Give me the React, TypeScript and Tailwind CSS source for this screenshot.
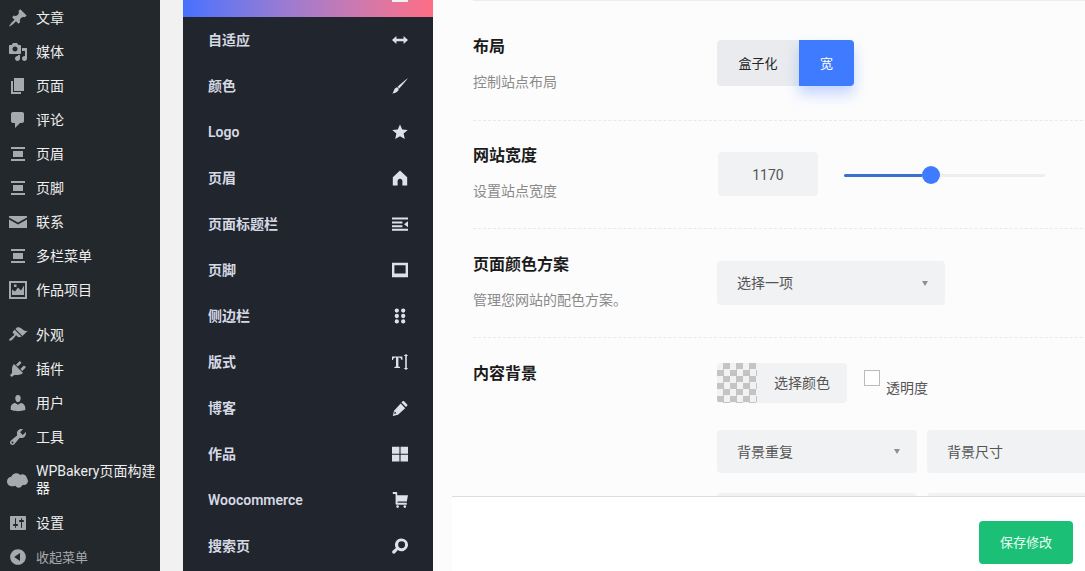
import type { ReactNode } from "react";

const FONT = "font-['Roboto','Noto_Sans_CJK_SC',sans-serif]";

function Icon({ d, className = "" }: { d: string; className?: string }) {
  return (
    <svg viewBox="0 0 20 20" fill="currentColor" fillRule="evenodd" className={className}>
      <path d={d} />
    </svg>
  );
}

// Dashboard menu glyphs
const P = {
  pin: "M10.44 3.02l1.82-1.82 6.36 6.35-1.83 1.82c-1.05-.68-2.48-.57-3.41.36l-.75.75c-.92.93-1.04 2.35-.35 3.41l-1.83 1.82-2.41-2.41-2.8 2.79c-.42.42-3.38 2.71-3.8 2.29s1.86-3.39 2.28-3.81l2.79-2.79L4.1 9.36l1.83-1.82c1.05.69 2.48.57 3.4-.36l.75-.75c.93-.92 1.05-2.35.36-3.41z",
  media: "M13 11V4c0-.55-.45-1-1-1h-1.67L9 1H5L3.67 3H2c-.55 0-1 .45-1 1v7c0 .55.45 1 1 1h10c.55 0 1-.45 1-1zM7 4.5c1.38 0 2.5 1.12 2.5 2.5S8.38 9.5 7 9.5 4.5 8.38 4.5 7 5.62 4.5 7 4.5zM14 6h5v10.5c0 1.38-1.12 2.5-2.5 2.5S14 17.88 14 16.5s1.12-2.5 2.5-2.5c.17 0 .34.02.5.05V9h-3V6zm-4 8.05V13h2v3.5c0 1.38-1.12 2.5-2.5 2.5S7 17.88 7 16.5 8.12 14 9.5 14c.17 0 .34.02.5.05z",
  page: "M6 15V2h10v13H6zm-1 1h8v2H3V5h2v11z",
  comment: "M5 2h9c1.1 0 2 .9 2 2v7c0 1.1-.9 2-2 2h-2l-5 5v-5H5c-1.1 0-2-.9-2-2V4c0-1.1.9-2 2-2z",
  layout: "M3 3h14v2H3zM5 7h10v6H5zM3 15h14v2H3z",
  mail: "M1 4h18v1.500L10 10.500 1 5.500zM1 7.500l9 5 9-5V16H1z",
  portfolio: "M1 1h18v18H1zM3 3v14h14V3zM4 15V9.500l3 2 3-4 3 3 3-5V15zM6 4.500h2.500V7H6z",
  brush: "M14.480 11.060L7.410 3.990l1.500-1.500c.5-.56 2.300-.47 3.510.32 1.210.8 1.430 1.280 2.910 2.100 1.180.64 2.450 1.260 4.450.85zm-.71.71L6.700 4.700 4.930 6.470c-.39.39-.39 1.020 0 1.410l1.060 1.060c.39.39.39 1.030 0 1.420-.6.6-1.430 1.110-2.210 1.690-.35.26-.7.53-1.010.84C1.430 13.230.76 14.770 1.440 15.450c.68.68 2.220.01 3.560-1.330.31-.31.58-.66.84-1.010.58-.78 1.090-1.610 1.690-2.210.39-.39 1.030-.39 1.420 0l1.060 1.060c.39.39 1.020.39 1.410 0z",
  plug: "M13.110 4.360L9.870 7.600 8 5.730l3.240-3.240c.35-.34 1.050-.2 1.560.32.52.51.66 1.210.31 1.550zm-8 1.770l.91-1.120 9.010 9.010-1.190.84c-.71.71-2.630 1.160-3.820 1.160H6.140L4.900 17.260c-.59.59-1.540.59-2.120 0-.59-.58-.59-1.530 0-2.120l1.240-1.240v-3.880c0-1.130.4-3.190 1.090-3.890zm7.260 3.970l3.240-3.240c.34-.35 1.040-.21 1.550.31.52.51.66 1.210.31 1.550l-3.240 3.250z",
  user: "M10 9.250c-2.270 0-2.730-3.440-2.730-3.440C7 4.020 7.820 2 9.970 2c2.160 0 2.980 2.020 2.710 3.810 0 0-.41 3.440-2.680 3.440zm0 2.570L12.720 10c2.390 0 4.520 2.330 4.520 4.530v2.490s-3.650 1.130-7.240 1.130c-3.650 0-7.240-1.130-7.240-1.130v-2.490c0-2.250 1.940-4.480 4.470-4.480z",
  wrench: "M16.680 9.770c-1.340 1.340-3.300 1.670-4.950.99l-5.410 6.520c-.99.99-2.590.99-3.580 0s-.99-2.590 0-3.570l6.520-5.420c-.68-1.650-.35-3.610.99-4.950 1.280-1.280 3.120-1.620 4.720-1.060l-2.890 2.890 2.820 2.820 2.860-2.870c.53 1.580.18 3.390-1.080 4.650zM3.810 16.210c.4.39 1.040.39 1.430 0 .4-.4.4-1.040 0-1.430-.39-.4-1.030-.4-1.430 0-.39.39-.39 1.030 0 1.430z",
  cloud: "M4.500 15.500C2 15.500 0 13.500 0 11c0-2.300 1.700-4.200 4-4.500C5 4.400 7 3 9.300 3.200c1.300.1 2.400.7 3.200 1.500 1-.6 2.100-.8 3.200-.5 1.900.5 3.200 2 3.400 3.800.6.700.9 1.600.9 2.500 0 2.200-1.700 3.800-3.700 3.800h-1.500c-.9 1.600-2.300 2.700-4 2.500-1.200-.2-2.200-.9-2.800-1.900-1 .4-2.300.6-3.500.6z",
  sliders: "M18 16V4c0-.55-.45-1-1-1H3c-.55 0-1 .45-1 1v12c0 .55.45 1 1 1h14c.55 0 1-.45 1-1zM8 11h1c.55 0 1 .45 1 1s-.45 1-1 1H8v1.500c0 .28-.22.5-.5.5s-.5-.22-.5-.5V13H6c-.55 0-1-.45-1-1s.45-1 1-1h1V5.500c0-.28.22-.5.5-.5s.5.22.5.5V11zm5-2h-1c-.55 0-1-.45-1-1s.45-1 1-1h1V5.500c0-.28.22-.5.5-.5s.5.22.5.5V7h1c.55 0 1 .45 1 1s-.45 1-1 1h-1v5.500c0 .28-.22.5-.5.5s-.5-.22-.5-.5V9z",
  collapse: "M10 2.160c4.330 0 7.840 3.510 7.840 7.840s-3.510 7.840-7.840 7.840S2.160 14.330 2.160 10 5.710 2.160 10 2.160zm2 11.720V6.120L6.180 9.970z",
};

// Options panel glyphs
const Q = {
  leftright: "M0 10l5.500-5v3.500h9V5l5.500 5-5.500 5v-3.500h-9V15z",
  paint: "M20 0C17 4 12 10 9 13l-2-2C10 8 16 3 20 0zM6.500 11.500l2 2c-.2 2.800-3 5.500-8.500 6 2-1.500 2-3.500 3-5.500.7-1.400 2-2.300 3.500-2.500z",
  star: "M10 .5l2.800 6.300 6.900.7-5.200 4.500 1.500 6.800L10 15.300l-6 3.500 1.500-6.800L.3 7.500l6.900-.7z",
  home: "M10 .5l9 8.500v10.500h-6V14c0-1.800-1.200-3-3-3s-3 1.200-3 3v5.500H1V9z",
  title: "M0 2h20v2.500H0zM0 7h13v2.500H0zM0 11.500h13V14H0zM0 16h20v2.500H0zM20 6.500v7.500l-5-3.700z",
  foot: "M0 1h20v18H0zM3 4v10.500h14V4z",
  dots: "M6 .5a2.700 2.700 0 1 1 0 5.400A2.700 2.700 0 0 1 6 .5zM14 .5a2.700 2.700 0 1 1 0 5.400 2.700 2.700 0 0 1 0-5.400zM6 7.300A2.700 2.700 0 1 1 6 12.700 2.700 2.700 0 0 1 6 7.300zM14 7.300a2.700 2.700 0 1 1 0 5.400 2.700 2.700 0 0 1 0-5.400zM6 14.100a2.700 2.700 0 1 1 0 5.400 2.700 2.700 0 0 1 0-5.400zM14 14.100a2.700 2.700 0 1 1 0 5.400 2.700 2.700 0 0 1 0-5.400z",
  type: "M0 3h13v4.500h-1.200C11.400 5.500 10.500 4.600 8 4.500V15.500l2 .7V17.500H3v-1.300l2-.7V4.500C2.500 4.600 1.600 5.500 1.200 7.500H0zM14.500 2.500L17.500 0l3 2.500h-2V17.500h2l-3 2.500-3-2.500h2V2.500z",
  pen: "M14.500 1l4.500 4.500c.5.500.5 1.200 0 1.700l-1.500 1.500-5.700-5.700 1.500-1.500c.5-.5 1.200-.5 1.700 0zM10.800 4.500l5.700 5.700-9 8.300L1 20l1.500-6.500zM3.500 14.500l-.8 3 3-.8z",
  grid: "M0 1h9.300v8.700H0zM10.700 1H20v8.700h-9.300zM0 10.800h9.300v8.700H0zM10.700 10.800H20v8.700h-9.300z",
  cart: "M1 0h4.500c.6 0 1 .4 1 1v3H20l-1.500 8H7v1.500h11.500V16H5.500c-.6 0-1-.4-1-1V2.500H1zM7 16.500a1.700 1.700 0 1 1 0 3.400 1.700 1.700 0 0 1 0-3.400zM16 16.500a1.700 1.700 0 1 1 0 3.400 1.700 1.700 0 0 1 0-3.400z",
  search: "M12 .5a8 8 0 1 1-4.700 14.500l-3.500 4c-.8.800-2.200.8-3 0s-.8-2.200 0-3l4-3.500A8 8 0 0 1 12 .5zm0 3.700a4.300 4.300 0 1 0 0 8.600 4.300 4.300 0 0 0 0-8.600z",
};

const upper = [
  ["文章", P.pin],
  ["媒体", P.media],
  ["页面", P.page],
  ["评论", P.comment],
  ["页眉", P.layout],
  ["页脚", P.layout],
  ["联系", P.mail],
  ["多栏菜单", P.layout],
  ["作品项目", P.portfolio],
];
const lower = [
  ["外观", P.brush],
  ["插件", P.plug],
  ["用户", P.user],
  ["工具", P.wrench],
];
const panelRows = [
  ["自适应", Q.leftright],
  ["颜色", Q.paint],
  ["Logo", Q.star],
  ["页眉", Q.home],
  ["页面标题栏", Q.title],
  ["页脚", Q.foot],
  ["侧边栏", Q.dots],
  ["版式", Q.type],
  ["博客", Q.pen],
  ["作品", Q.grid],
  ["Woocommerce", Q.cart],
  ["搜索页", Q.search],
];

function MenuItem({ label, d }: { label: string; d: string }) {
  return (
    <div className="flex h-[34px] items-center">
      <div className="flex w-[36px] shrink-0 justify-center pr-[1px]">
        <Icon d={d} className="h-5 w-5 text-[#a7aaad]" />
      </div>
      <span className="text-[14px] leading-[17px] text-[#eeeeee]">{label}</span>
    </div>
  );
}

function Caret() {
  return (
    <svg viewBox="0 0 6 5" className="h-[5px] w-[6px] text-[#8a8f98]" fill="currentColor">
      <path d="M0 0h6L3 5z" />
    </svg>
  );
}

function SelectBox({ label, className, caret = true }: { label: string; className: string; caret?: boolean }) {
  return (
    <div className={`flex shrink-0 items-center justify-between rounded-[4px] bg-[#f1f2f4] pl-5 pr-[17px] text-[14px] text-[#555555] ${className}`}>
      <span className="pt-[1px]">{label}</span>
      {caret && <Caret />}
    </div>
  );
}

function Section({
  title,
  hint,
  height,
  top,
  last = false,
  children,
}: {
  title: string;
  hint?: string;
  height: string;
  top: string;
  last?: boolean;
  children: ReactNode;
}) {
  return (
    <section className={`flex ${height} shrink-0 ${last ? "" : "border-b border-dashed border-[#e9e9ec]"}`}>
      <div className={`w-[244px] shrink-0 ${top}`}>
        <h3 className="text-[16px] font-bold leading-6 text-[#1b1b1b]">{title}</h3>
        {hint && <p className="mt-[13px] text-[14px] leading-[20px] text-[#8a8a8a]">{hint}</p>}
      </div>
      <div className="min-w-0 flex-1">{children}</div>
    </section>
  );
}

export default function App() {
  return (
    <div className={`flex h-screen w-full overflow-hidden bg-[#f1f1f1] ${FONT}`}>
      {/* WordPress admin menu */}
      <aside className="w-[160px] shrink-0 bg-[#23282d] pt-[1px]">
        {upper.map(([label, d]) => (
          <MenuItem key={label} label={label} d={d} />
        ))}
        <div className="h-[11px]" />
        {lower.map(([label, d]) => (
          <MenuItem key={label} label={label} d={d} />
        ))}
        <div className="flex h-[52px] items-center">
          <div className="flex w-[36px] shrink-0 justify-center pr-[1px]">
            <Icon d={P.cloud} className="h-[21px] w-[21px] text-[#a7aaad]" />
          </div>
          <span className="text-[14px] leading-[17px] text-[#eeeeee]">WPBakery页面构建器</span>
        </div>
        <MenuItem label="设置" d={P.sliders} />
        <div className="flex h-[34px] items-center">
          <div className="flex w-[36px] shrink-0 justify-center pr-[1px]">
            <Icon d={P.collapse} className="h-5 w-5 text-[#a7aaad]" />
          </div>
          <span className="text-[13px] leading-[17px] text-[#a7aaad]">收起菜单</span>
        </div>
      </aside>

      <div className="w-[23px] shrink-0" />

      {/* Theme options navigation */}
      <nav className="w-[250px] shrink-0 bg-[#21252e]">
        <div className="flex h-[17px] justify-end bg-gradient-to-r from-[#4470ff] to-[#ff6d85] pr-[25px]">
          <div className="h-[2px] w-4 bg-[#f1f1f5]" />
        </div>
        {panelRows.map(([label, d]) => (
          <div key={label} className="flex h-[46px] items-center justify-between pl-[25px] pr-[25px]">
            <span className="text-[14px] font-semibold text-[#d5d9e3]">{label}</span>
            <Icon d={d} className="h-4 w-4 text-[#dde1ec]" />
          </div>
        ))}
      </nav>

      {/* Options form */}
      <main className="relative min-w-0 flex-1 overflow-hidden bg-[#fcfcfd]">
        <div className="ml-[40px] flex w-[700px] flex-col border-t border-[#ececec]">
          <Section title="布局" hint="控制站点布局" height="h-[120px]" top="pt-[34px]">
            <div className="mt-[39px] flex h-[46px] w-[137px] text-[13px]">
              <div className="flex w-[82px] items-center justify-center rounded-l-[4px] bg-[#e9ebee] pt-[1px] text-[#222222]">盒子化</div>
              <div className="flex w-[55px] items-center justify-center rounded-r-[4px] bg-[#3f7bff] pt-[1px] text-white shadow-[0_8px_14px_rgba(63,123,255,0.3)]">宽</div>
            </div>
          </Section>
          <Section title="网站宽度" hint="设置站点宽度" height="h-[108px]" top="pt-[23px]">
            <div className="ml-[1px] mt-[31px] flex items-center">
              <div className="flex h-[44px] w-[100px] items-center justify-center rounded-[4px] bg-[#f1f2f4] pt-[2px] text-[14px] text-[#555555]">1170</div>
              <div className="ml-[26px] mt-[2px] flex h-[3px] w-[201px] items-center rounded-full bg-[#eeeeee]">
                <div className="h-[3px] w-[78px] rounded-l-full bg-[#3a70cf]" />
                <div className="h-[18px] w-[18px] rounded-full bg-[#3f7bff]" />
              </div>
            </div>
          </Section>
          <Section title="页面颜色方案" hint="管理您网站的配色方案。" height="h-[109px]" top="pt-[24px]">
            <SelectBox label="选择一项" className="mt-[32px] h-[44px] w-[228px]" />
          </Section>
          <Section title="内容背景" height="h-[200px]" top="pt-[24px]" last>
            <div className="mt-[25px] flex h-[40px]">
              <div className="h-[40px] w-[40px] rounded-l-[4px] bg-[repeating-conic-gradient(#c4c4c4_0_25%,#f2f2f2_0_50%)] bg-[length:13px_13px]" />
              <div className="flex w-[90px] items-center justify-center rounded-r-[4px] bg-[#f1f2f4] text-[14px] text-[#555555]">选择颜色</div>
              <div className="ml-[17px] mt-[7px] h-[16px] w-[16px] border border-[#bbbbbb] bg-white" />
              <span className="ml-[6px] mt-[15px] text-[14px] leading-5 text-[#555555]">透明度</span>
            </div>
            <div className="mt-[27px] flex gap-[10px]">
              <SelectBox label="背景重复" className="h-[43px] w-[200px]" />
              <SelectBox label="背景尺寸" className="h-[43px] w-[200px]" caret={false} />
            </div>
            <div className="mt-[20px] flex gap-[10px]">
              <div className="h-[43px] w-[200px] rounded-[4px] bg-[#f1f2f4]" />
              <div className="h-[43px] w-[200px] rounded-[4px] bg-[#f1f2f4]" />
            </div>
          </Section>
        </div>

        <div className="absolute bottom-0 left-[19px] right-0 flex h-[75px] items-start justify-end border-t border-[#dddddd] bg-white pr-3 pt-[24px]">
          <button className="flex h-[43px] w-[94px] items-center justify-center rounded-[4px] bg-[#1cbf76] text-[13px] text-[#e8fff4]">保存修改</button>
        </div>
      </main>
    </div>
  );
}
